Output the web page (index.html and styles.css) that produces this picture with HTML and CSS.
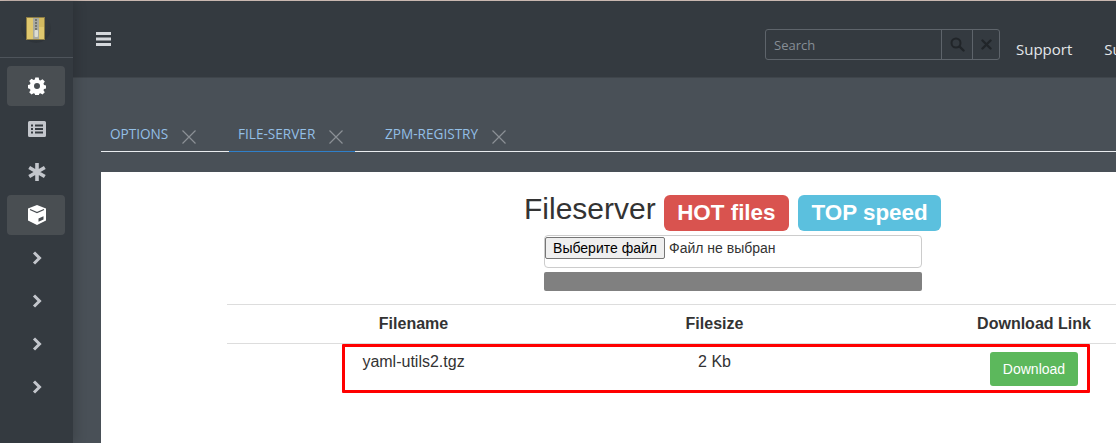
FILE: index.html
```html
<!DOCTYPE html>
<html lang="en">
<head>
<meta charset="utf-8">
<title>Fileserver</title>
<link rel="stylesheet" href="styles.css">
</head>
<body>
<div class="app">
  <aside class="sidebar">
    <div class="brand">
      <div class="logo">
        <svg width="19" height="23" viewBox="0 0 19 23">
          <rect x="0" y="0" width="19" height="23" fill="#8d7d45"/>
          <rect x="1" y="1" width="17" height="21" fill="#e0c86e"/>
          <rect x="13" y="1" width="5" height="9" fill="#d3ba60"/>
          <rect x="7" y="1" width="6" height="21" fill="#a9aaa0"/>
          <path d="M9 3h2M9 6h2M9 9h2M9 12h2" stroke="#63665f" stroke-width="1.400"/>
          <rect x="8.500" y="13" width="3.500" height="7" rx="1" fill="#dcdcd2"/>
        </svg>
      </div>
    </div>
    <nav class="nav">
      <a class="nav-item active">
        <svg class="ic" width="18" height="18" viewBox="0 0 18 18"><path fill="#fff" fill-rule="evenodd" d="M7.300.5h3.400l.5 2.400 1.200.6 2.100-1.300 2.300 2.400-1.300 2 .5 1.300 2.300.6v3l-2.300.5-.5 1.300 1.300 2-2.300 2.300-2.100-1.300-1.200.5-.5 2.400H7.300l-.5-2.400-1.200-.5-2.100 1.300-2.300-2.300 1.300-2-.5-1.300L-.3 11V8l2.300-.6.5-1.300-1.300-2 2.300-2.400 2.100 1.300 1.200-.6zM9 6a3 3 0 1 0 0 6 3 3 0 0 0 0-6z"/></svg>
      </a>
      <a class="nav-item">
        <svg class="ic" width="20" height="18" viewBox="0 0 20 18"><path fill="#c3c6cc" fill-rule="evenodd" d="M2.500 1h15A1.500 1.500 0 0 1 19 2.500v13a1.500 1.500 0 0 1-1.500 1.500h-15A1.500 1.500 0 0 1 1 15.500v-13A1.500 1.500 0 0 1 2.500 1zM4 4.500v2h2v-2zm4 0v2h8v-2zM4 8v2h2V8zm4 0v2h8V8zm-4 3.500v2h2v-2zm4 0v2h8v-2z"/></svg>
      </a>
      <a class="nav-item">
        <svg class="ic" width="20" height="20" viewBox="0 0 20 20"><path stroke="#c3c6cc" stroke-width="3.600" d="M10 1v18M2.200 5.500l15.600 9M2.200 14.500l15.600-9"/></svg>
      </a>
      <a class="nav-item active">
        <svg class="ic" width="18" height="20" viewBox="0 0 18 20"><path fill="#fff" d="M9 0l9 3.400v12L9 20l-9-4.600v-12z"/><path fill="none" stroke="#494e52" stroke-width="1.200" d="M2 4.500L9 7.600l7-3.100"/><path fill="#494e52" d="M10.500 13.500l5-2.300v3.200l-5 2.400z"/></svg>
      </a>
      <a class="nav-item"><svg class="ic" width="10" height="14" viewBox="0 0 10 14"><path fill="none" stroke="#c3c6cc" stroke-width="3" d="M2 1.500L7.500 7 2 12.500"/></svg></a>
      <a class="nav-item"><svg class="ic" width="10" height="14" viewBox="0 0 10 14"><path fill="none" stroke="#c3c6cc" stroke-width="3" d="M2 1.500L7.500 7 2 12.500"/></svg></a>
      <a class="nav-item"><svg class="ic" width="10" height="14" viewBox="0 0 10 14"><path fill="none" stroke="#c3c6cc" stroke-width="3" d="M2 1.500L7.500 7 2 12.500"/></svg></a>
      <a class="nav-item"><svg class="ic" width="10" height="14" viewBox="0 0 10 14"><path fill="none" stroke="#c3c6cc" stroke-width="3" d="M2 1.500L7.500 7 2 12.500"/></svg></a>
    </nav>
  </aside>
  <main class="main">
    <header class="topbar">
      <svg class="burger" width="15" height="14" viewBox="0 0 15 14"><path stroke="#d5d8dc" stroke-width="3" d="M0 1.500h15M0 7h15M0 12.500h15"/></svg>
      <div class="search">
        <span class="search-input">Search</span>
        <span class="search-btn">
          <svg width="15" height="15" viewBox="0 0 15 15"><circle cx="6" cy="6" r="4.500" fill="none" stroke="#212529" stroke-width="2"/><path stroke="#212529" stroke-width="2.400" stroke-linecap="round" d="M9.500 9.500l4 4"/></svg>
        </span>
        <span class="search-btn narrow">
          <svg width="11" height="11" viewBox="0 0 11 11"><path stroke="#212529" stroke-width="2.400" stroke-linecap="round" d="M1.500 1.500l8 8M9.500 1.500l-8 8"/></svg>
        </span>
      </div>
      <a class="top-link">Support</a>
      <a class="top-link">Support</a>
    </header>
    <div class="workspace">
      <div class="tabs">
        <div class="tab tab-options">OPTIONS<svg class="close" width="14" height="14" viewBox="0 0 14 14"><path stroke="#8b9096" stroke-width="1.200" d="M.5.500l13 13M13.500.500l-13 13"/></svg></div>
        <div class="tab tab-file selected">FILE-SERVER<svg class="close" width="14" height="14" viewBox="0 0 14 14"><path stroke="#8b9096" stroke-width="1.200" d="M.5.500l13 13M13.500.500l-13 13"/></svg></div>
        <div class="tab tab-zpm">ZPM-REGISTRY<svg class="close" width="14" height="14" viewBox="0 0 14 14"><path stroke="#8b9096" stroke-width="1.200" d="M.5.500l13 13M13.500.500l-13 13"/></svg></div>
      </div>
      <section class="panel">
        <div class="heading">
          <h1 class="title">Fileserver</h1>
          <span class="label label-hot">HOT files</span>
          <span class="label label-top">TOP speed</span>
        </div>
        <div class="upload">
          <div class="file-box"><input class="file-input" type="file" lang="ru" id="f" hidden><label class="file-btn" for="f">Выберите файл</label><span class="file-name">Файл не выбран</span></div>
          <div class="progress"></div>
        </div>
        <div class="table">
          <div class="row head">
            <div class="cell">Filename</div>
            <div class="cell">Filesize</div>
            <div class="cell">Download Link</div>
          </div>
          <div class="row body">
            <div class="cell">yaml-utils2.tgz</div>
            <div class="cell">2 Kb</div>
            <div class="cell"><a class="download">Download</a></div>
          </div>
          <div class="highlight"></div>
        </div>
      </section>
    </div>
  </main>
</div>
</body>
</html>
```
FILE: styles.css
```css
* { box-sizing: border-box; }
html, body { margin: 0; height: 100%; overflow: hidden; }
body { background: #495057; font-family: "Liberation Sans", Arial, sans-serif; color: #333; }
.app { display: flex; height: 443px; border-top: 1px solid #c9b7b0; }
.sidebar { width: 73px; flex: none; background: #343a40; box-shadow: 4px 0 10px rgba(0,0,0,.14); position: relative; z-index: 2; }
.brand { height: 57px; border-bottom: 1px solid #4e545b; display: flex; justify-content: center; padding-top: 12px; }
.logo { width: 30px; height: 30px; border-radius: 50%; background: radial-gradient(circle at 50% 30%, #343a40 35%, #2b3035 100%); display: flex; align-items: center; justify-content: center; margin-right: 2px; }
.nav { display: flex; flex-direction: column; align-items: center; padding: 8px 8px 0 7px; gap: 3px; }
.nav-item { width: 58px; height: 40px; display: flex; align-items: center; justify-content: center; border-radius: 4px; padding-left: 1px; }
.nav-item.active { background: #494e52; }
.main { flex: 1; min-width: 0; display: flex; flex-direction: column; }
.topbar { height: 77px; background: #343a40; border-bottom: 1px solid #3f454b; display: flex; align-items: flex-start; padding-left: 23px; flex: none; white-space: nowrap; }
.burger { margin-top: 31px; flex: none; }
.search { margin-left: 654px; margin-top: 28px; width: 235px; height: 31px; flex: none; display: flex; border: 1px solid #5e646b; border-radius: 3px; }
.search-input { flex: 1; padding: 1px 0 0 8px; font: 13px/29px "Open Sans", sans-serif; color: #868e96; }
.search-btn { width: 31px; border-left: 1px solid #5e646b; display: flex; align-items: center; justify-content: center; flex: none; }
.search-btn.narrow { width: 27px; }
.top-link { font: 15px/20px "Open Sans", sans-serif; color: #e4e7ea; margin-top: 38px; margin-left: 16px; flex: none; }
.top-link + .top-link { margin-left: 32px; }
.workspace { flex: 1; min-height: 0; background: #495057; padding: 40px 0 0 28px; display: flex; flex-direction: column; }
.tabs { display: flex; height: 34px; border-bottom: 1px solid #e9ecef; flex: none; font: 13.600px/20px "Open Sans", sans-serif; color: #93bfe6; white-space: nowrap; }
.tab { height: 34px; padding: 6px 0 0 9px; display: flex; align-items: flex-start; }
.tab-options { width: 128px; }
.tab-file { width: 126px; }
.tab-zpm { padding-left: 30px; }
.tab.selected { border-bottom: 1px solid #2f7fc9; }
.close { margin: 6px 0 0 14px; flex: none; }
.panel { flex: 1; margin-top: 20px; background: #fff; min-width: 0; overflow: hidden; }
.heading { display: flex; align-items: flex-start; padding: 19px 0 0 423px; height: 63px; white-space: nowrap; }
.title { margin: 0; font-size: 30px; font-weight: 400; line-height: 36px; color: #333; }
.label { height: 36px; border-radius: 6px; color: #fff; font-weight: 700; font-size: 22.400px; line-height: 35px; padding: 0 13.500px; margin-top: 4px; }
.label-hot { background: #d9534f; margin-left: 8px; }
.label-top { background: #5bc0de; margin-left: 9px; }
.upload { margin-left: 443px; width: 378px; display: flex; flex-direction: column; gap: 4px; }
.file-box { height: 33px; border: 1px solid #ccc; border-radius: 4px; padding: 1px 0; font-size: 14px; display: flex; align-items: flex-start; color: #333; }
.file-btn { width: 120px; height: 22px; background: #efefef; border: 1px solid #767676; border-radius: 2px; text-align: center; line-height: 20px; color: #000; }
.file-name { margin-left: 4px; line-height: 22px; }
.progress { height: 19px; background: #808080; border-radius: 2px; }
.table { position: relative; margin: 13px 0 0 126px; width: 1012px; }
.row { display: grid; grid-template-columns: 373px 229px 410px; text-align: center; font-size: 16px; border-top: 1px solid #ddd; }
.row.head { height: 39px; font-weight: 700; line-height: 38px; color: #333; }
.row.body { height: 60px; padding-top: 8px; line-height: 20px; }
.download { display: inline-block; width: 88px; height: 34px; background: #5cb85c; border-radius: 3px; color: #fff; font-size: 14px; line-height: 34px; }
.highlight { position: absolute; left: 115px; top: 40px; width: 748px; height: 49px; border: 3px solid #f00; border-radius: 1px; }
```
